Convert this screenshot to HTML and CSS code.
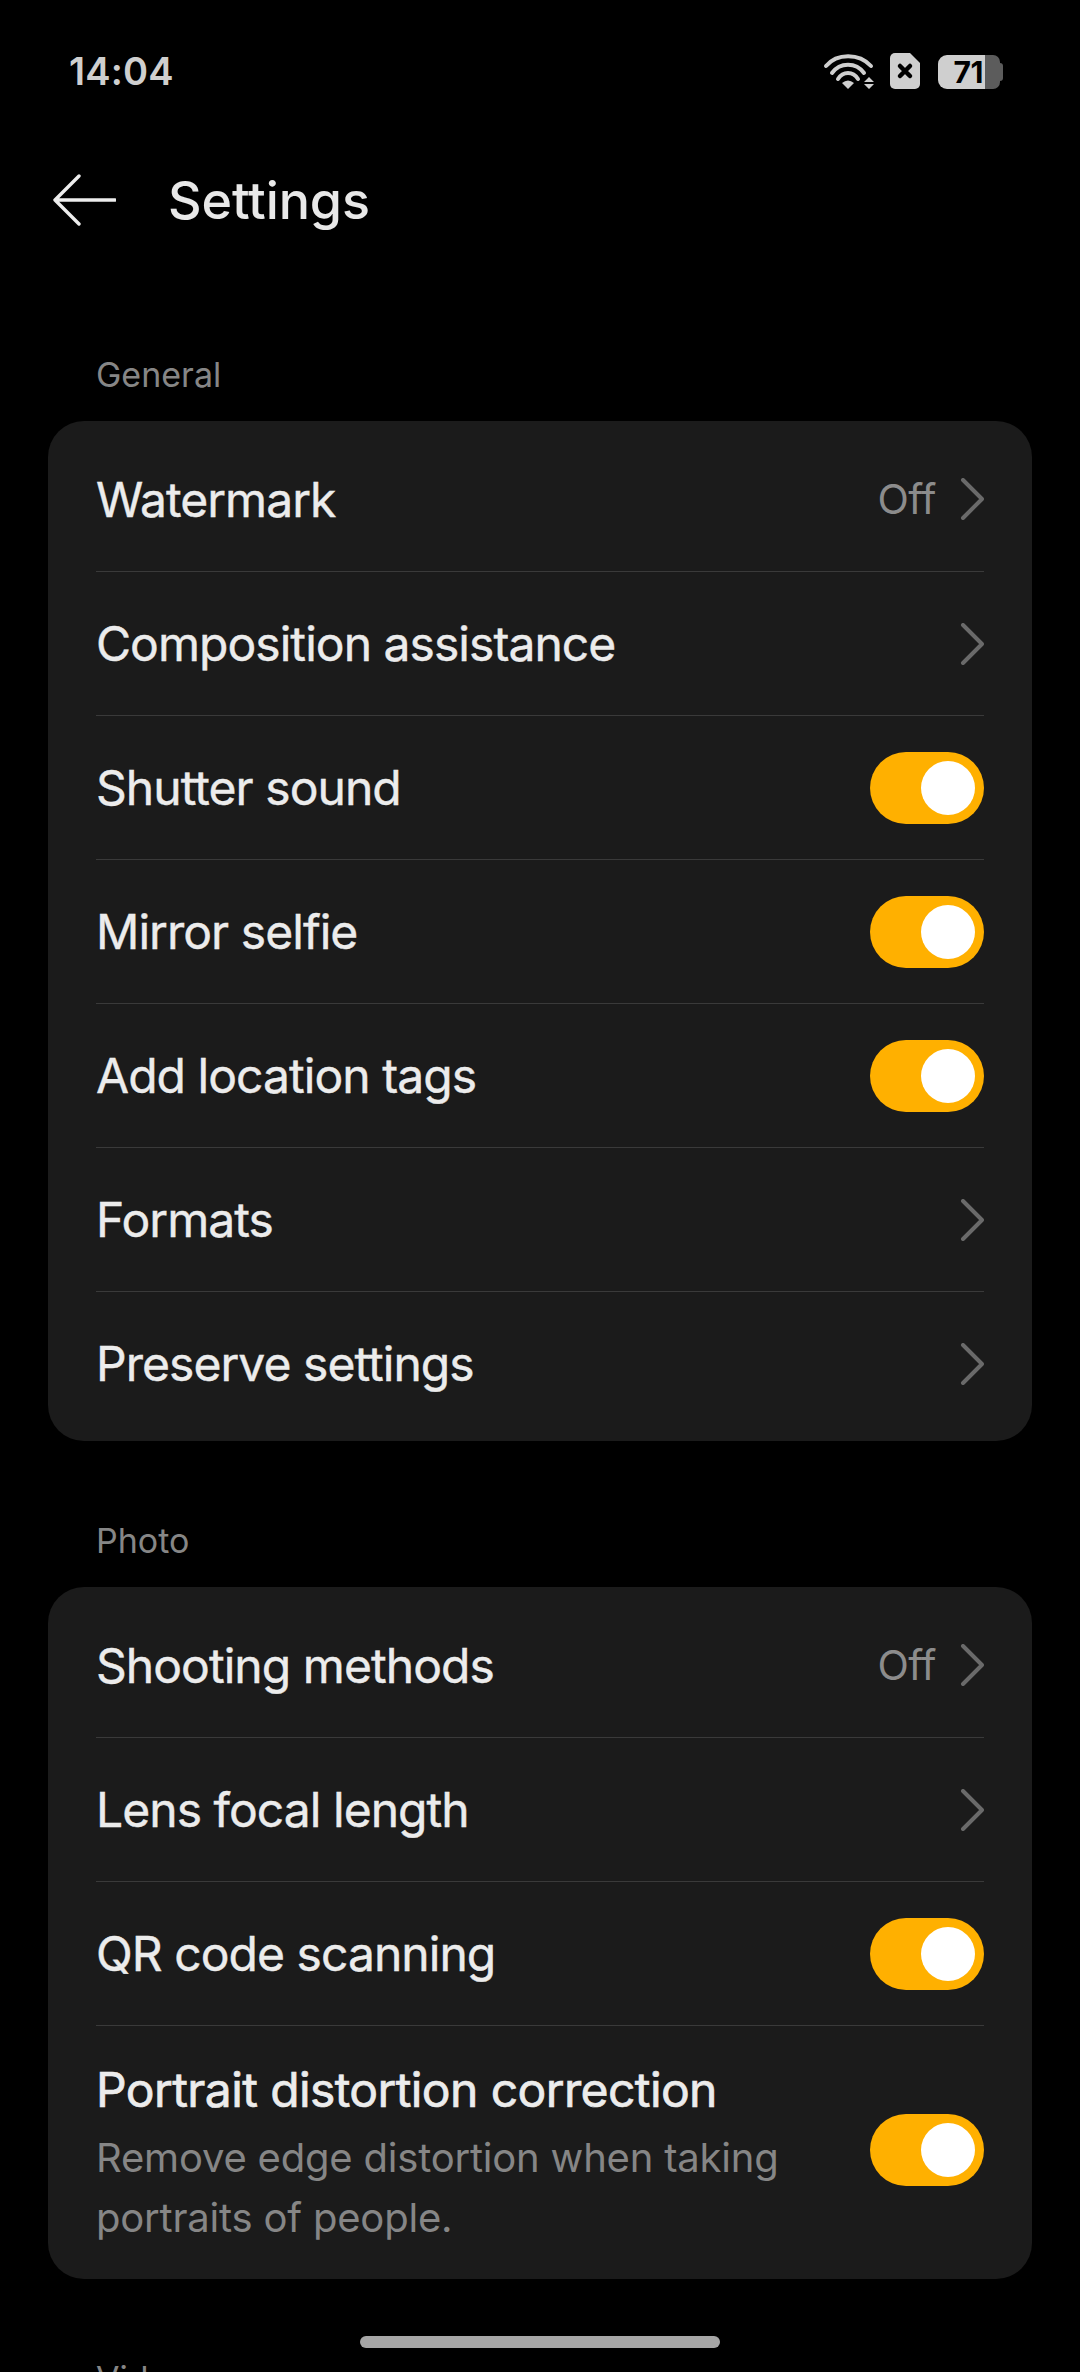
FILE: index.html
```html
<!DOCTYPE html>
<html lang="en">
<head>
<meta charset="utf-8">
<title>Settings</title>
<link rel="stylesheet" href="styles.css">
</head>
<body>
<div class="screen">
  <div class="status">
    <span class="time">14:04</span>
    <div class="status-icons">
      <svg class="wifi" width="52" height="37" viewBox="0 0 52 37" fill="none">
        <path d="M3 13C14 0 36 0 48 13" stroke="#cfcfcf" stroke-width="4" stroke-linecap="round"/>
        <path d="M9 20C17 9 33 9 41 20" stroke="#cfcfcf" stroke-width="4" stroke-linecap="round"/>
        <path d="M15 26C20 18 30 18 35 26" stroke="#cfcfcf" stroke-width="4" stroke-linecap="round"/>
        <path d="M25 36L19 30Q25 25 31 30Z" fill="#cfcfcf"/>
        <path d="M46 24L51 29H41Z M41 31H51L46 36Z" fill="#cfcfcf"/>
      </svg>
      <svg class="sim" width="30" height="36" viewBox="0 0 30 36">
        <path d="M5 0H20L30 10V31A5 5 0 0 1 25 36H5A5 5 0 0 1 0 31V5A5 5 0 0 1 5 0Z" fill="#cfcfcf"/>
        <path d="M10 13L20 23M20 13L10 23" stroke="#000" stroke-width="4.5" stroke-linecap="round"/>
      </svg>
      <div class="battery">
        <span class="battery-level">71</span>
        <span class="battery-cap"></span>
      </div>
    </div>
  </div>

  <header class="title-bar">
    <svg class="back" width="64" height="52" viewBox="0 0 64 52" fill="none">
      <path d="M27 2L3 26L27 50M3 26H63" stroke="#ededed" stroke-width="3.4" stroke-linecap="round" stroke-linejoin="round"/>
    </svg>
    <h1>Settings</h1>
  </header>

  <main class="content">
    <h2 class="section">General</h2>
    <section class="card">
      <div class="row"><span class="label">Watermark</span><span class="value">Off</span><svg class="chev" width="24" height="42" viewBox="0 0 24 42" fill="none"><path d="M3 2L22 21L3 40" stroke="#6a6a6a" stroke-width="4" stroke-linecap="round" stroke-linejoin="round"/></svg></div>
      <div class="row"><span class="label">Composition assistance</span><svg class="chev" width="24" height="42" viewBox="0 0 24 42" fill="none"><path d="M3 2L22 21L3 40" stroke="#6a6a6a" stroke-width="4" stroke-linecap="round" stroke-linejoin="round"/></svg></div>
      <div class="row"><span class="label">Shutter sound</span><span class="toggle"></span></div>
      <div class="row"><span class="label">Mirror selfie</span><span class="toggle"></span></div>
      <div class="row"><span class="label">Add location tags</span><span class="toggle"></span></div>
      <div class="row"><span class="label">Formats</span><svg class="chev" width="24" height="42" viewBox="0 0 24 42" fill="none"><path d="M3 2L22 21L3 40" stroke="#6a6a6a" stroke-width="4" stroke-linecap="round" stroke-linejoin="round"/></svg></div>
      <div class="row"><span class="label">Preserve settings</span><svg class="chev" width="24" height="42" viewBox="0 0 24 42" fill="none"><path d="M3 2L22 21L3 40" stroke="#6a6a6a" stroke-width="4" stroke-linecap="round" stroke-linejoin="round"/></svg></div>
    </section>

    <h2 class="section">Photo</h2>
    <section class="card">
      <div class="row"><span class="label">Shooting methods</span><span class="value">Off</span><svg class="chev" width="24" height="42" viewBox="0 0 24 42" fill="none"><path d="M3 2L22 21L3 40" stroke="#6a6a6a" stroke-width="4" stroke-linecap="round" stroke-linejoin="round"/></svg></div>
      <div class="row"><span class="label">Lens focal length</span><svg class="chev" width="24" height="42" viewBox="0 0 24 42" fill="none"><path d="M3 2L22 21L3 40" stroke="#6a6a6a" stroke-width="4" stroke-linecap="round" stroke-linejoin="round"/></svg></div>
      <div class="row"><span class="label">QR code scanning</span><span class="toggle"></span></div>
      <div class="row row-tall">
        <div class="text">
          <span class="label">Portrait distortion correction</span>
          <p class="desc">Remove edge distortion when taking portraits of people.</p>
        </div>
        <span class="toggle"></span>
      </div>
    </section>

    <h2 class="section">Video</h2>
  </main>
  <div class="home-bar"></div>
</div>
</body>
</html>
```

FILE: styles.css
```css
* { box-sizing: border-box; }
html, body { margin: 0; padding: 0; background: #000; }
.screen {
  position: relative;
  width: 1080px;
  height: 2372px;
  overflow: hidden;
  background: #000;
  font-family: Inter, "Noto Sans", sans-serif;
  color: #ececec;
}
.status {
  height: 150px;
  padding: 0 80px 8px 69px;
  display: flex;
  justify-content: space-between;
  align-items: center;
}
.time { font-size: 38px; line-height: 44px; font-weight: 600; color: #cfcfcf; letter-spacing: 0.2px; }
.status-icons { display: flex; align-items: center; gap: 15px; }
.wifi, .sim { display: block; }
.battery {
  width: 62px;
  height: 34px;
  margin: 2px 0 0 3px;
  border-radius: 9px 7px 7px 9px;
  position: relative;
  background: linear-gradient(to right, #cfcfcf 0 47px, #5c5c5c 47px);
  color: #000;
  font-size: 30px;
  font-weight: 700;
  line-height: 34px;
  letter-spacing: -0.5px;
  text-align: right;
  padding-right: 17px;
}
.battery-cap {
  position: absolute;
  right: -3px;
  top: 8px;
  width: 3px;
  height: 18px;
  border-radius: 0 3px 3px 0;
  background: #5c5c5c;
}
.title-bar {
  height: 100px;
  padding-left: 52px;
  display: flex;
  align-items: center;
  gap: 52px;
}
.title-bar h1 { margin: 0; font-size: 52px; font-weight: 500; color: #e8e8e8; letter-spacing: -0.1px; }
.back { display: block; }
.content { padding-top: 105px; }
.section {
  margin: 0 0 26px;
  padding-left: 96px;
  font-size: 34px;
  font-weight: 400;
  line-height: 40px;
  color: #868686;
}
.card {
  margin: 0 48px 80px;
  padding: 6px 48px;
  background: #1b1b1b;
  border-radius: 36px;
}
.row {
  display: flex;
  align-items: center;
  height: 144px;
  border-top: 1px solid #3a3a3a;
}
.row:first-child { border-top: 0; }
.row-tall { height: 248px; }
.label {
  flex: 1;
  font-size: 48px;
  font-weight: 400;
  letter-spacing: -0.95px;
  color: #ececec;
  -webkit-text-stroke: 0.4px #ececec;
}
.text { flex: 1; padding: 8px 60px 0 0; }
.text .label { display: block; line-height: 60px; letter-spacing: -0.6px; -webkit-text-stroke-width: 0.7px; }
.desc { margin: 8px 0 0; font-size: 40px; line-height: 60px; color: #868686; font-weight: 400; letter-spacing: -0.2px; }
.value { font-size: 41px; letter-spacing: -0.5px; color: #8c8c8c; margin-right: 24px; }
.chev { display: block; flex: none; }
.toggle {
  position: relative;
  flex: none;
  width: 114px;
  height: 72px;
  border-radius: 36px;
  background: #ffb000;
}
.toggle::after {
  content: "";
  position: absolute;
  top: 9px;
  right: 9px;
  width: 54px;
  height: 54px;
  border-radius: 50%;
  background: #fff;
}
.home-bar {
  position: absolute;
  left: 360px;
  top: 2336px;
  width: 360px;
  height: 12px;
  border-radius: 6px;
  background: #a6a6a6;
}
```
